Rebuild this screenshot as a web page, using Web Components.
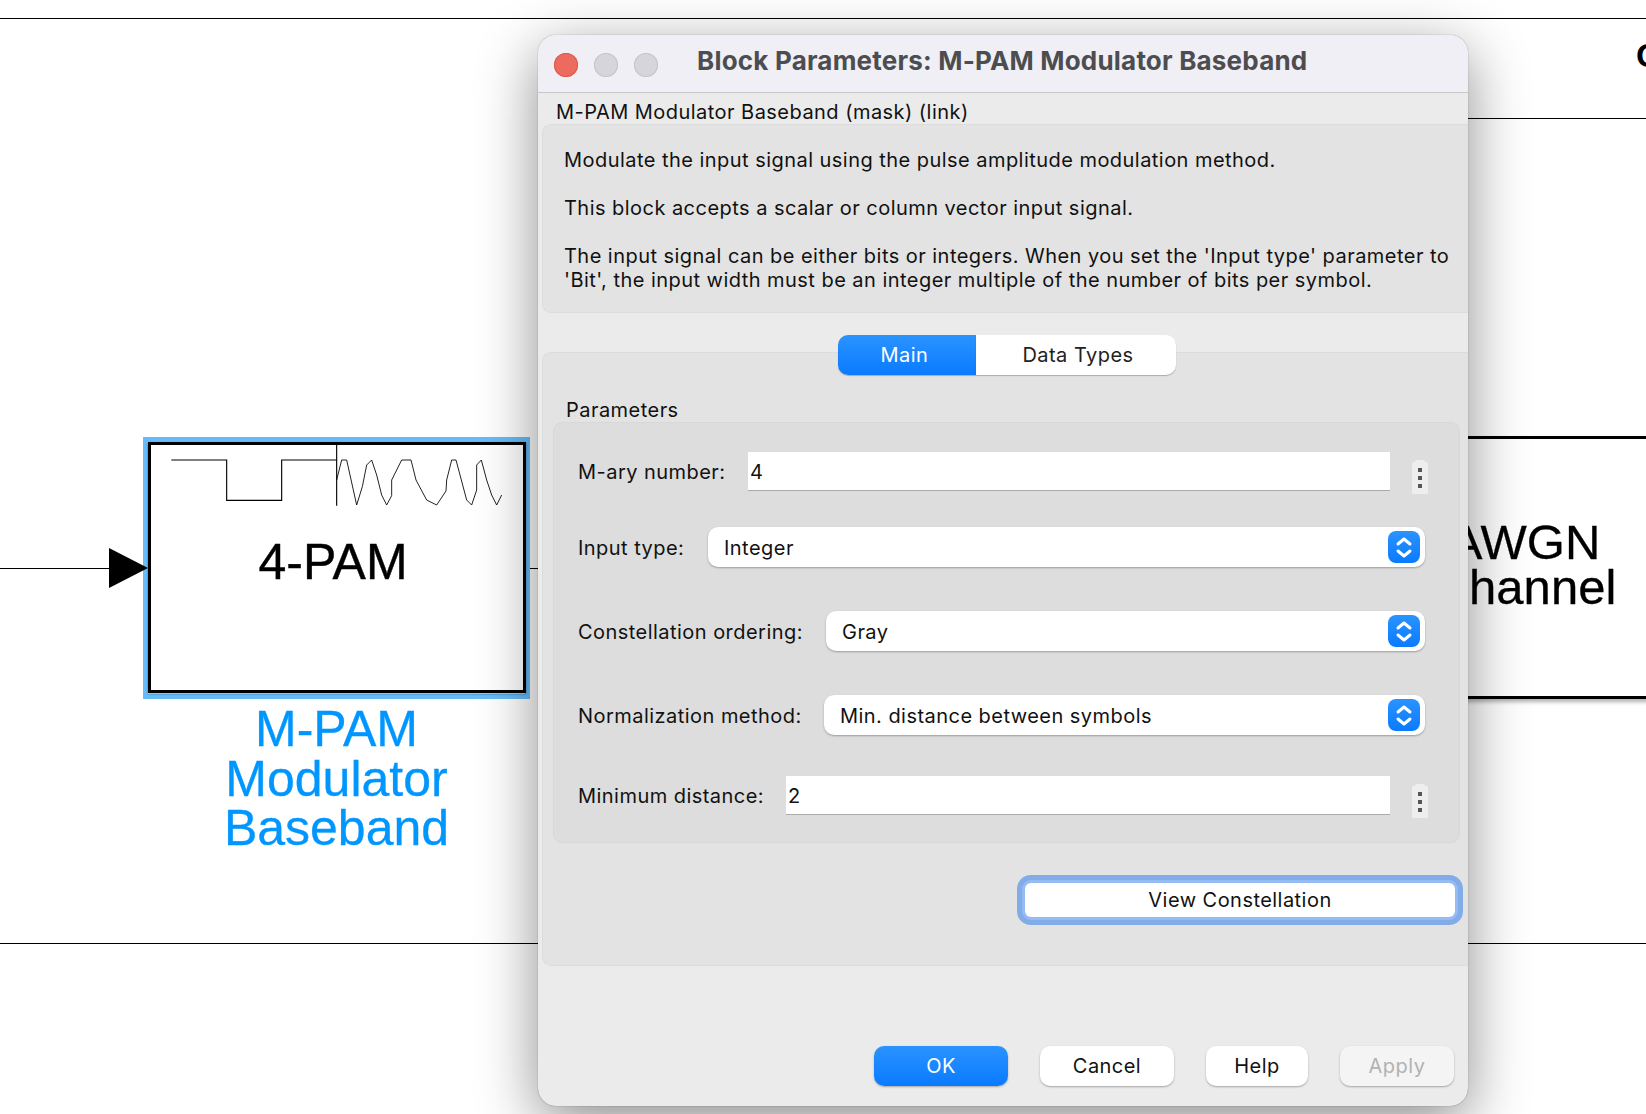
<!doctype html>
<html>
<head>
<meta charset="utf-8">
<title>Block Parameters</title>
<style>
  html, body { margin: 0; height: 100%; overflow: hidden; background: #fff; }
  body { font-family: Inter, "Liberation Sans", sans-serif; }
</style>
</head>
<body>
<model-canvas>
  <model-block slot="blocks"></model-block>
  <mask-dialog slot="dialog" heading="Block Parameters: M-PAM Modulator Baseband">
    <span slot="subtitle">M-PAM Modulator Baseband (mask) (link)</span>
    <span slot="description">Modulate the input signal using the pulse amplitude modulation method.<br><br>This block accepts a scalar or column vector input signal.<br><br>The input signal can be either bits or integers. When you set the 'Input type' parameter to<br>'Bit', the input width must be an integer multiple of the number of bits per symbol.</span>
    <param-row slot="params" label="M-ary number:" kind="edit" value="4" style="--lw:170px;--top:29px"></param-row>
    <param-row slot="params" label="Input type:" kind="select" value="Integer" style="--lw:130px;--top:33px"></param-row>
    <param-row slot="params" label="Constellation ordering:" kind="select" value="Gray" style="--lw:248px;--top:44px"></param-row>
    <param-row slot="params" label="Normalization method:" kind="select" value="Min. distance between symbols" style="--lw:246px;--top:44px"></param-row>
    <param-row slot="params" label="Minimum distance:" kind="edit" value="2" style="--lw:208px;--top:41px"></param-row>
  </mask-dialog>
</model-canvas>

<script>
const text_spacing = '0.46px'

class ModelCanvas extends HTMLElement {
  constructor() {
    super()
    this.attachShadow({ mode: 'open' }).innerHTML = `
      <style>
        :host { display: block; position: relative; width: 1646px; height: 1114px; overflow: hidden; background: #fff; }
        .line { position: absolute; height: 1px; background: #000; }
        .awgn { position: absolute; left: 1336px; top: 436px; width: 378px; height: 263px; box-sizing: border-box;
          border: 3px solid #000; box-shadow: 0 3px 4px rgba(0,0,0,.3); text-align: center; padding-top: 81px;
          font: 49px/45px "Liberation Sans", sans-serif; -webkit-text-stroke: .3px #000; color: #000; background: #fff; }
        .cut { position: absolute; left: 1636px; top: 35px; font: bold 34px/40px "Liberation Sans", sans-serif; color: #000; }
      </style>
      <div class="line" style="left:0;right:0;top:18px"></div>
      <div class="line" style="left:1200px;right:0;top:118px"></div>
      <div class="line" style="left:0;right:0;top:943px"></div>
      <div class="line" style="left:0;width:110px;top:568px"></div>
      <div class="line" style="left:520px;width:100px;top:568px"></div>
      <div class="cut">C</div>
      <div class="awgn">AWGN<br>Channel</div>
      <slot name="blocks"></slot>
      <slot name="dialog"></slot>`
  }
}

class ModelBlock extends HTMLElement {
  constructor() {
    super()
    this.attachShadow({ mode: 'open' }).innerHTML = `
      <style>
        :host { display: block; position: absolute; left: 143px; top: 437px; width: 387px; height: 262px; }
        .select { box-sizing: border-box; height: 100%; border: 5px solid #66bcfb; }
        .body { box-sizing: border-box; height: 251px; margin-right: -1px; border: 3px solid #000; background: #fff; position: relative;
          box-shadow: 0 1px 2px rgba(0,0,0,.4); text-align: center; font: 50px/50px "Liberation Sans", sans-serif; color: #000; }
        .body span { position: absolute; left: 0; right: 8px; top: 92px; -webkit-text-stroke: .4px #000; }
        svg { position: absolute; left: -11px; top: -15px; }
        .arrow { position: absolute; left: -34px; top: 111px; width: 0; height: 0;
          border-left: 39px solid #000; border-top: 20px solid transparent; border-bottom: 20px solid transparent; }
        .name { position: absolute; left: -50px; right: -50px; top: 268px; text-align: center; color: #0096ff;
          font: 50px/49.5px "Liberation Sans", sans-serif; -webkit-text-stroke: .3px #0096ff; }
      </style>
      <div class="select">
        <div class="body">
          <svg width="380" height="100" viewBox="0 0 1140 300" fill="none" stroke="#000" stroke-width="3.4">
            <path d="M94 90H260V211H425V90H590"/>
            <path d="M590 45V227"/>
            <path stroke-width="2.6" d="M590 150L605 90H620L650 225L667 170L680 105L695 90L710 135L725 195L740 225L755 197V150L785 90H813L828 150L860 210L890 225L918 183L920 150L935 90H948L980 210L995 225L1010 180V105L1024 90L1040 150L1055 195L1070 225L1085 195"/>
          </svg>
          <span>4-PAM</span>
        </div>
      </div>
      <div class="arrow"></div>
      <div class="name">M-PAM<br>Modulator<br>Baseband</div>`
  }
}

class MaskDialog extends HTMLElement {
  constructor() {
    super()
    this.attachShadow({ mode: 'open' }).innerHTML = `
      <style>
        :host { display: flex; flex-direction: column; position: absolute; left: 538px; top: 35px; width: 930px; height: 1071px;
          box-sizing: border-box; background: #ebebeb; border-radius: 18px; overflow: hidden; color: #111;
          font: 20px/24px Inter, "Liberation Sans", sans-serif; letter-spacing: ${text_spacing}; }
        .title { height: 57px; flex: none; display: flex; align-items: center; background: #efeff5; border-bottom: 1px solid #c8c8c8; }
        .lights { display: flex; gap: 16px; margin-left: 16px; width: 143px; flex: none; }
        .lights i { width: 24px; height: 24px; border-radius: 50%; background: #d5d5da; box-shadow: inset 0 0 0 1px #c4c4c9; margin-top: 2px; }
        .lights i:first-child { background: #ed6a5e; box-shadow: inset 0 0 0 1px #d95a4f; }
        h1 { margin: 0 0 6px; font: 700 26px/32px Inter, "Liberation Sans", sans-serif; letter-spacing: .2px; color: #4d4d50; white-space: nowrap; }
        .sub { height: 31px; flex: none; padding-left: 18px; box-sizing: border-box; line-height: 38px; white-space: nowrap; }
        .desc { flex: none; height: 189px; box-sizing: border-box; margin-left: 4px; padding: 23px 0 0 21px; background: #e3e3e3;
          border: 1px solid #dcdcdc; border-right: 0; border-radius: 9px 0 0 9px; white-space: nowrap; }
        .tabs { flex: none; display: flex; height: 40px; margin: 22px 0 -23px 300px; position: relative; z-index: 1; width: 338px; font-size: 20px; }
        .tabs div { display: flex; align-items: center; justify-content: center; height: 40px; box-sizing: border-box; box-shadow: 0 1px 1px rgba(0,0,0,.25); }
        .tabs .on { width: 138px; padding-right: 5px; color: #fff; background: linear-gradient(#2a93ff,#0a7bff); border-radius: 10px 0 0 10px; }
        .tabs .off { width: 200px; padding-left: 4px; background: #fff; border-radius: 0 10px 10px 0; color: #222; }
        .tabpanel { flex: none; height: 614px; box-sizing: border-box; margin-left: 4px; background: #e3e3e3; border: 1px solid #dcdcdc;
          border-right: 0; border-radius: 9px 0 0 9px; padding: 0 0 0 10px; }
        .legend { padding: 45px 0 0 13px; height: 24px; line-height: 24px; }
        .group { box-sizing: border-box; width: 907px; height: 421px; padding: 0 31px 0 24px; background: #ddd;
          border: 1px solid #d8d8d8; border-radius: 9px; }
        .action { display: flex; justify-content: flex-end; margin: 40px 13px 0 0; }
        button { font: inherit; letter-spacing: inherit; border: 0; padding: 0; color: #111; background: #fff; }
        .view { width: 430px; height: 34px; padding-bottom: 1px; border-radius: 6px; box-shadow: 0 0 0 3px #94bbf2, 0 0 0 8px #82ace8; }
        .foot { display: flex; margin-top: 80px; padding-left: 336px; }
        .foot button { height: 40px; border-radius: 10px; box-shadow: 0 1px 2px rgba(0,0,0,.3); }
        .ok { width: 134px; color: #fff; background: linear-gradient(#2a93ff,#0a7bff); margin-right: 32px; }
        .cancel { width: 134px; margin-right: 32px; }
        .help { width: 102px; margin-right: 32px; }
        .apply { width: 114px; background: #f4f4f4; color: #b2b2b2; }
      </style>
      <div class="title">
        <div class="lights"><i></i><i></i><i></i></div>
        <h1>${this.getAttribute('heading')}</h1>
      </div>
      <div class="sub"><slot name="subtitle"></slot></div>
      <div class="desc"><slot name="description"></slot></div>
      <div class="tabs"><div class="on">Main</div><div class="off">Data Types</div></div>
      <div class="tabpanel">
        <div class="legend">Parameters</div>
        <div class="group"><slot name="params"></slot></div>
        <div class="action"><button class="view">View Constellation</button></div>
      </div>
      <div class="foot">
        <button class="ok">OK</button><button class="cancel">Cancel</button><button class="help">Help</button><button class="apply">Apply</button>
      </div>`
  }
}

class ParamRow extends HTMLElement {
  constructor() {
    super()
    const kind = this.getAttribute('kind')
    const label = this.getAttribute('label')
    const value = this.getAttribute('value')
    const field = kind === 'select'
      ? `<div class="select"><span>${value}</span>
           <i class="step"><svg width="32" height="32" viewBox="0 0 32 32" fill="none" stroke="#fff" stroke-width="3" stroke-linecap="round" stroke-linejoin="round"><path d="M10 13L16 8L22 13M10 20L16 25L22 20"/></svg></i></div>`
      : `<div class="edit">${value}</div><div class="dots"><i></i><i></i><i></i></div>`
    this.attachShadow({ mode: 'open' }).innerHTML = `
      <style>
        :host { display: flex; align-items: flex-start; margin-top: var(--top, 0); }
        .label { flex: 0 0 var(--lw); height: 40px; white-space: nowrap; line-height: ${kind === 'select' ? 42 : 40}px; }
        .edit { flex: 1; height: 39px; box-sizing: border-box; padding-left: 2px; background: #fff; line-height: 40px; border-bottom: 1px solid #aaa; }
        .dots { flex: none; width: 16px; height: 32px; margin: 10px 0 0 22px; background: #eee; border-radius: 2px 2px 0 0; position: relative;
          display: flex; flex-direction: column; align-items: center; gap: 4px; padding-top: 6px; box-sizing: border-box; }
        .dots::before { content: ""; position: absolute; left: 3px; right: 3px; top: -2px; height: 2px; background: #eee; border-radius: 3px 3px 0 0; }
        .dots i { width: 4px; height: 4px; background: #555; }
        .select { flex: 1; height: 40px; margin-right: 3px; display: flex; align-items: center; justify-content: space-between; padding-left: 16px;
          background: #fff; border-radius: 10px; box-shadow: 0 1px 2px rgba(0,0,0,.3); }
        .select span { padding-top: 2px; }
        .step { display: block; width: 32px; height: 32px; margin-right: 5px; border-radius: 8px; background: linear-gradient(#2a93ff,#0a7bff); }
        svg { display: block; }
      </style>
      <div class="label">${label}</div>${field}`
  }
}

customElements.define('model-canvas', ModelCanvas)
customElements.define('model-block', ModelBlock)
customElements.define('mask-dialog', MaskDialog)
customElements.define('param-row', ParamRow)

// window shadow lives on the dialog host
document.querySelector('mask-dialog').style.boxShadow = '0 0 1px rgba(0,0,0,.6), 0 16px 60px rgba(0,0,0,.45)'
</script>
</body>
</html>
